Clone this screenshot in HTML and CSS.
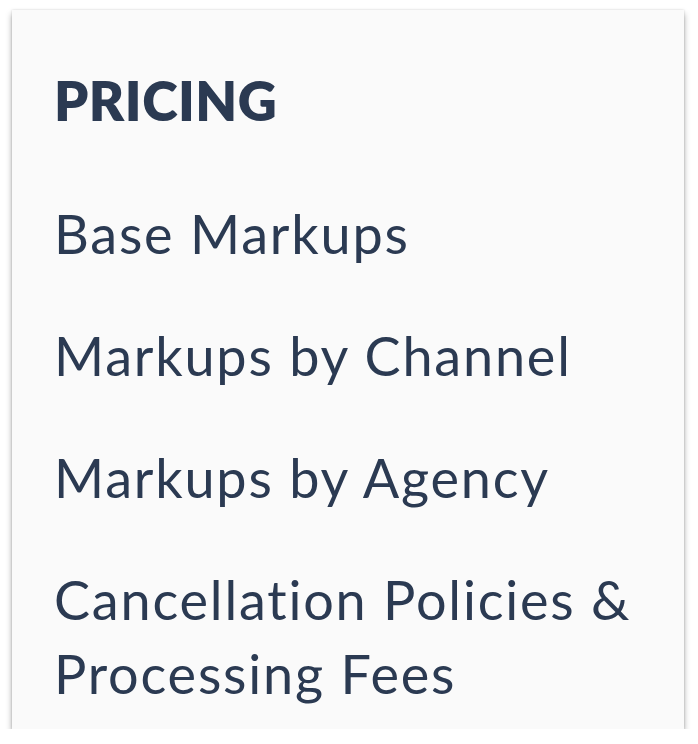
FILE: index.html
```html
<!DOCTYPE html>
<html>
<head>
<meta charset="utf-8">
<title>Pricing</title>
<link rel="stylesheet" href="styles.css">
</head>
<body>

<div class="panel">
	<div class="panel-title">PRICING</div>
	<ul class="menu">
		<li><a href="#">Base Markups</a></li>
		<li><a href="#">Markups by Channel</a></li>
		<li><a href="#">Markups by Agency</a></li>
		<li><a href="#">Cancellation Policies &amp; Processing Fees</a></li>
	</ul>
</div>

</body>
</html>
```

FILE: styles.css
```css
* {
font-family: Lato, "Noto Sans", sans-serif;
font-variant-ligatures: none;
}
body {
margin: 0;
background: #fff;
}
.panel {
margin: 10px 14px 0 12px;
height: 719px;
box-sizing: border-box;
background: #fafafa;
box-shadow: 0 4px 6px rgba(0, 0, 0, 0.35), 0 0 2px rgba(0, 0, 0, 0.15);
padding: 54px 30px 0 42px;
color: #2b3a52;
}
.panel-title {
font-size: 54px;
font-weight: 800;
letter-spacing: 0.5px;
line-height: 74px;
margin-bottom: 59px;
}
.menu {
list-style: none;
margin: 0;
padding: 0;
display: flex;
flex-direction: column;
gap: 48px;
}
.menu li {
font-size: 54px;
letter-spacing: 1.8px;
line-height: 74px;
}
.menu a {
color: #2b3a52;
text-decoration: none;
}
```
